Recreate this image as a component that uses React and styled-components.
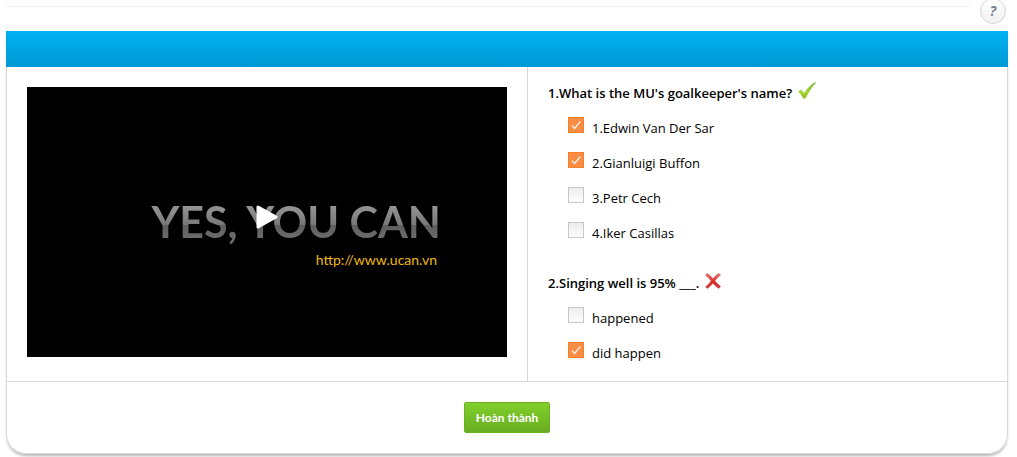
import React, { useState } from "react";
import styled, { createGlobalStyle } from "styled-components";

const GlobalStyle = createGlobalStyle`
  * { box-sizing: border-box; }
  body {
    margin: 0;
    background: #fff;
    color: #000;
    font: 13px/20px "Open Sans", "Noto Sans", sans-serif;
  }
`;

const Page = styled.div`
  padding: 0 9px 3px 6px;
  overflow: hidden;
`;

const TopBar = styled.div`
  display: flex;
  align-items: flex-start;
  gap: 10px;
  height: 31px;
  padding-right: 2px;
`;

const Rule = styled.hr`
  flex: 1;
  margin: 6px 0 0;
  border: 0;
  border-top: 1px solid #f0f0f0;
`;

const HelpButton = styled.button`
  width: 26px;
  height: 26px;
  margin-top: -2px;
  padding: 0;
  border: 1px solid #d6d6d6;
  border-radius: 50%;
  background: linear-gradient(#fff, #f1f1f1);
  color: #7d8087;
  font: italic bold 14px/24px "Noto Sans", sans-serif;
  cursor: pointer;
`;

const Panel = styled.section`
  border: 1px solid #d9d9d9;
  border-top: 0;
  border-radius: 0 0 20px 20px;
  box-shadow: 0 3px 3px -1px rgba(0, 0, 0, 0.3);
`;

const PanelHeader = styled.header`
  height: 36px;
  margin: 0 -1px;
  background: linear-gradient(#00b1f2, #0099d5);
`;

const Columns = styled.div`
  display: grid;
  grid-template-columns: 52% 48%;
`;

const MediaColumn = styled.div`
  padding: 20px;
`;

const Video = styled.div`
  position: relative;
  display: flex;
  flex-direction: column;
  align-items: flex-end;
  justify-content: center;
  aspect-ratio: 16 / 9;
  padding: 24px 66px 0 0;
  background: #000;
  font-family: Lato, sans-serif;
`;

const Slogan = styled.div`
  background: linear-gradient(#949494 20%, #787878 55%, #5e5e5e 56%, #6e6e6e 85%);
  background-clip: text;
  color: transparent;
  font-size: 43px;
  font-weight: bold;
  line-height: 52px;
  white-space: nowrap;
`;

const SiteLink = styled.a`
  padding-right: 4px;
  color: #f0b810;
  font-size: 14px;
  line-height: 24px;
  text-decoration: none;
`;

const PlayButton = styled.button`
  position: absolute;
  top: 48%;
  left: 50%;
  width: 22px;
  height: 24px;
  padding: 0;
  border: 0;
  background: none;
  transform: translate(-50%, -50%);
  cursor: pointer;

  svg { display: block; }
`;

const QuizColumn = styled.div`
  display: flex;
  flex-direction: column;
  gap: 15px;
  padding: 8px 20px 11px;
  border-left: 1px solid #d9d9d9;
`;

const Question = styled.fieldset`
  min-width: 0;
  margin: 0;
  padding: 0;
  border: 0;
`;

const Prompt = styled.legend`
  display: flex;
  align-items: center;
  gap: 6px;
  height: 35px;
  padding: 0;
  font-weight: 600;

  svg { margin-bottom: 4px; }
`;

const Option = styled.label`
  display: flex;
  align-items: flex-start;
  gap: 8px;
  height: 35px;
  padding: 7px 0 0 20px;
  line-height: 22px;
`;

const Box = styled.span`
  display: grid;
  flex: none;
  width: 16px;
  height: 16px;

  > * { grid-area: 1 / 1; }
  svg { pointer-events: none; }
`;

const Tick = styled.input`
  appearance: none;
  width: 16px;
  height: 16px;
  margin: 0;
  border: 1px solid #c8c8c8;
  background: linear-gradient(#ededed, #fdfdfd);

  &:checked {
    border-color: #f5802c;
    background: #fa8d45;
  }
`;

const PanelFooter = styled.footer`
  display: flex;
  justify-content: center;
  padding: 20px;
  border-top: 1px solid #d9d9d9;
`;

const SubmitButton = styled.button`
  height: 31px;
  padding: 0 11px;
  border: 1px solid #6cb022;
  border-radius: 2px;
  background: linear-gradient(#80cf2b, #69ad22);
  color: #fff;
  font: bold 12px/20px Lato, "Noto Sans", sans-serif;
  cursor: pointer;
`;

function CorrectIcon() {
  return (
    <svg width="18" height="18" viewBox="0 0 18 18" role="img" aria-label="Correct">
      <defs>
        <linearGradient id="correct" x1="0" y1="0" x2="0" y2="1">
          <stop offset="0" stopColor="#7cae3c" />
          <stop offset="0.6" stopColor="#a8dc1e" />
          <stop offset="1" stopColor="#8ab52c" />
        </linearGradient>
      </defs>
      <path
        d="M.4 9.600 3.200 8 6.200 11.600C9 7 12.500 3.100 17.200.3l.4.500C13.600 5.200 10.400 10.400 7.500 16l-2 .6C4.200 13.800 2.600 11.600.4 9.600Z"
        fill="url(#correct)"
        stroke="#8fbd45"
        strokeWidth=".5"
      />
    </svg>
  );
}

function WrongIcon() {
  return (
    <svg width="16" height="16" viewBox="0 0 16 16" role="img" aria-label="Wrong">
      <defs>
        <linearGradient id="wrong" x1="0" y1="0" x2="0" y2="1">
          <stop offset="0" stopColor="#ee7770" />
          <stop offset="0.55" stopColor="#dc2624" />
          <stop offset="1" stopColor="#d8403c" />
        </linearGradient>
      </defs>
      <path
        d="M.5 2.1 2.3.6C4.4 2 6.3 3.8 8 5.7 9.700 3.700 11.600 1.900 13.800.5l1.700 1.500C13.200 3.700 11.400 5.700 9.800 7.900c1.700 2 3.600 3.800 5.700 5.500l-1.800 2C11.500 14 9.600 12.200 7.900 10.200 6.300 12.200 4.500 14 2.500 15.500L.6 13.800C2.800 12.100 4.600 10.100 6.200 7.900 4.600 5.700 2.700 3.800.5 2.100Z"
        fill="url(#wrong)"
        stroke="#b9423e"
        strokeWidth=".6"
      />
    </svg>
  );
}

const questions = [
  {
    prompt: "1.What is the MU's goalkeeper's name?",
    correct: true,
    options: [
      ["1.Edwin Van Der Sar", true],
      ["2.Gianluigi Buffon", true],
      ["3.Petr Cech", false],
      ["4.Iker Casillas", false],
    ],
  },
  {
    prompt: "2.Singing well is 95% ___.",
    correct: false,
    options: [
      ["happened", false],
      ["did happen", true],
    ],
  },
];

function Answer({ text, initial }) {
  const [checked, setChecked] = useState(initial);
  return (
    <Option>
      <Box>
        <Tick type="checkbox" checked={checked} onChange={() => setChecked(!checked)} />
        {checked && (
          <svg width="16" height="16" viewBox="0 0 16 16" aria-hidden="true">
            <path d="M4 8.500 6.700 11.500 12.300 4.500" fill="none" stroke="#fff0e4" strokeWidth="1.300" />
          </svg>
        )}
      </Box>
      {text}
    </Option>
  );
}

export default function App() {
  return (
    <Page>
      <GlobalStyle />
      <TopBar>
        <Rule />
        <HelpButton type="button">?</HelpButton>
      </TopBar>
      <Panel>
        <PanelHeader />
        <Columns>
          <MediaColumn>
            <Video>
              <Slogan>YES, YOU CAN</Slogan>
              <SiteLink href="http://www.ucan.vn">http://www.ucan.vn</SiteLink>
              <PlayButton type="button" aria-label="Play">
                <svg width="22" height="24" viewBox="0 0 22 24">
                  <path d="M2 2v20L20 12Z" fill="#fff" stroke="#fff" strokeWidth="3" strokeLinejoin="round" />
                </svg>
              </PlayButton>
            </Video>
          </MediaColumn>
          <QuizColumn>
            {questions.map((question) => (
              <Question key={question.prompt}>
                <Prompt>
                  {question.prompt}
                  {question.correct ? <CorrectIcon /> : <WrongIcon />}
                </Prompt>
                {question.options.map(([text, initial]) => (
                  <Answer key={text} text={text} initial={initial} />
                ))}
              </Question>
            ))}
          </QuizColumn>
        </Columns>
        <PanelFooter>
          <SubmitButton type="button">Hoàn thành</SubmitButton>
        </PanelFooter>
      </Panel>
    </Page>
  );
}
